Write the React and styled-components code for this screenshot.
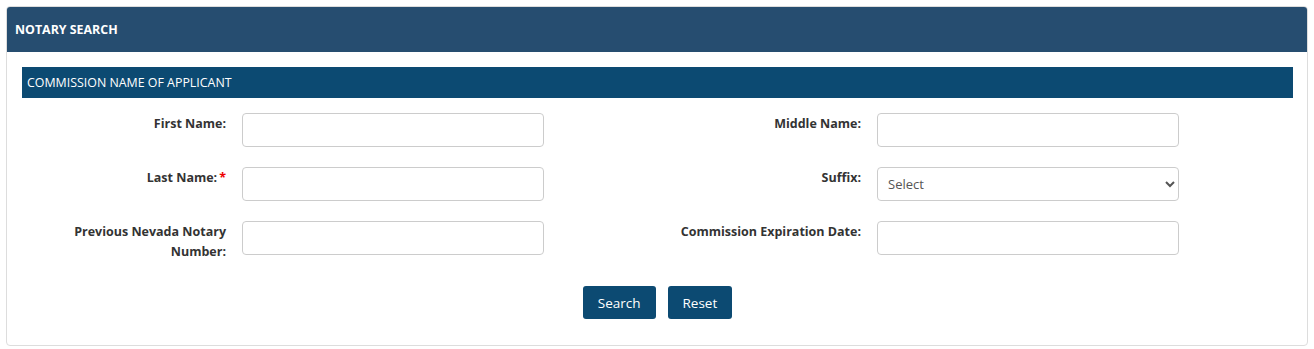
import React, { useState } from 'react'
import styled, { createGlobalStyle } from 'styled-components'

const GlobalStyle = createGlobalStyle`
  body {
    margin: 0;
    padding: 6px;
    background: #fff;
    font-family: "Open Sans", Lato, sans-serif;
    color: #333;
  }
  * { box-sizing: border-box; }
`

const Card = styled.div`
  border: 1px solid #ddd;
  border-radius: 4px;
  width: 1302px;
  overflow: hidden;
`

const CardHeader = styled.div`
  background: #264d70;
  color: #fff;
  font-weight: 700;
  font-size: 12.4px;
  height: 45px;
  display: flex;
  align-items: center;
  padding-left: 8px;
`

const CardBody = styled.div`
  padding: 15px 14px 26px 15px;
`

const SectionBar = styled.div`
  background: #0c4a72;
  color: #fff;
  font-size: 12.4px;
  height: 31px;
  display: flex;
  align-items: center;
  padding-left: 5px;
  margin-bottom: 15px;
`

const FormGrid = styled.div`
  display: grid;
  grid-template-columns: 635px 1fr;
  row-gap: 20px;
`

const Field = styled.div`
  display: grid;
  grid-template-columns: 204px 302px;
  column-gap: 16px;
  align-items: start;
`

const Label = styled.label`
  text-align: right;
  font-weight: 700;
  font-size: 12.5px;
  line-height: 20px;
  color: #333;
  padding-top: 1px;
`

const Req = styled.span`
  color: #e00;
  margin-left: 2px;
`

const Input = styled.input`
  height: 34px;
  width: 302px;
  border: 1px solid #ccc;
  border-radius: 4px;
  padding: 6px 8px;
  font-size: 13px;
  font-family: inherit;
  outline: none;
`

const Select = styled.select`
  height: 34px;
  width: 302px;
  border: 1px solid #ccc;
  border-radius: 4px;
  padding: 6px 6px;
  font-size: 13px;
  font-family: inherit;
  color: #555;
  background: #fff;
  outline: none;
`

const Actions = styled.div`
  display: flex;
  justify-content: center;
  gap: 12px;
  margin-top: 24px;
`

const Button = styled.button`
  background: #0c4a72;
  color: #fff;
  border: none;
  border-radius: 3px;
  height: 33px;
  padding: 0 15px;
  font-size: 13.5px;
  font-family: inherit;
  cursor: pointer;
`

const empty = { first: '', middle: '', last: '', suffix: '', prev: '', exp: '' }

export default function App() {
  const [form, setForm] = useState(empty)
  const set = (k) => (e) => setForm((prev) => ({ ...prev, [k]: e.target.value }))

  return (
    <>
      <GlobalStyle />
      <Card>
        <CardHeader>NOTARY SEARCH</CardHeader>
        <CardBody>
          <SectionBar>COMMISSION NAME OF APPLICANT</SectionBar>
          <FormGrid>
            <Field>
              <Label>First Name:</Label>
              <Input value={form.first} onChange={set('first')} />
            </Field>
            <Field>
              <Label>Middle Name:</Label>
              <Input value={form.middle} onChange={set('middle')} />
            </Field>
            <Field>
              <Label>Last Name:<Req>*</Req></Label>
              <Input value={form.last} onChange={set('last')} />
            </Field>
            <Field>
              <Label>Suffix:</Label>
              <Select value={form.suffix} onChange={set('suffix')}>
                <option value="">Select</option>
                <option value="Jr">Jr</option>
                <option value="Sr">Sr</option>
                <option value="II">II</option>
                <option value="III">III</option>
              </Select>
            </Field>
            <Field>
              <Label>Previous Nevada Notary<br />Number:</Label>
              <Input value={form.prev} onChange={set('prev')} />
            </Field>
            <Field>
              <Label>Commission Expiration Date:</Label>
              <Input value={form.exp} onChange={set('exp')} />
            </Field>
          </FormGrid>
          <Actions>
            <Button type="button">Search</Button>
            <Button type="button" onClick={() => setForm(empty)}>Reset</Button>
          </Actions>
        </CardBody>
      </Card>
    </>
  )
}
